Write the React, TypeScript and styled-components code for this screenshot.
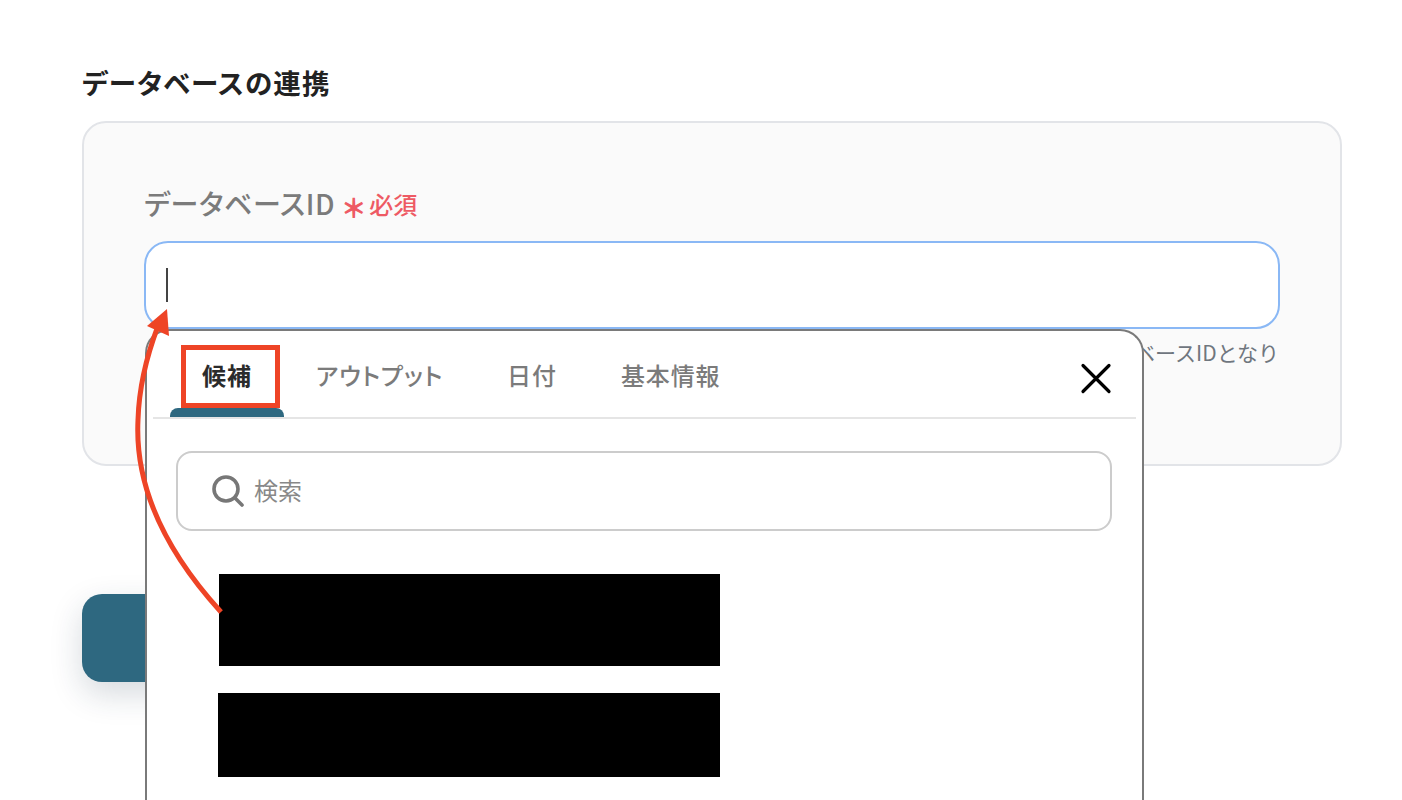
import React from 'react'
import styled, { createGlobalStyle } from 'styled-components'

const tabs = ['候補', 'アウトプット', '日付', '基本情報']

export default function App() {
  return (
    <Page>
      <GlobalStyle />
      <Title>データベースの連携</Title>
      <Panel>
        <FieldLabel>
          データベースID
          <RequiredMark>
            <Asterisk>＊</Asterisk>必須
          </RequiredMark>
        </FieldLabel>
        <FieldArea>
          <TextField>
            <Caret />
          </TextField>
          <Hint>データベースのURLの一部がデータベースIDとなり</Hint>
          <Popup>
            <TabBar>
              {tabs.map((tab, i) => (
                <Tab key={tab} $active={i === 0}>
                  {tab}
                </Tab>
              ))}
              <CloseButton>
                <svg width="32" height="32" viewBox="0 0 32 32" fill="none" stroke="#000" strokeWidth="3.2" strokeLinecap="round">
                  <path d="M3 3.5 29 29.5M29 3.5 3 29.5" />
                </svg>
              </CloseButton>
            </TabBar>
            <PopupBody>
              <SearchBox>
                <svg width="32" height="32" viewBox="0 0 32 32" fill="none" stroke="#777" strokeWidth="3.6" strokeLinecap="round">
                  <circle cx="14" cy="14" r="12" />
                  <path d="M23 23 30 30" />
                </svg>
                <SearchText>検索</SearchText>
              </SearchBox>
              <Redacted $indent={43} $height={92} $gap={27} />
              <Redacted $indent={42} $height={84} />
            </PopupBody>
          </Popup>
        </FieldArea>
      </Panel>
      <SaveButton />
      <Annotation width="1402" height="800" viewBox="0 0 1402 800" fill="none">
        <rect x="183.5" y="347.5" width="94" height="58" stroke="#ee4426" strokeWidth="5" />
        <path d="M221 612C160 545 135 480 138 420 139 385 147 355 158 326" stroke="#ee4426" strokeWidth="5" />
        <path d="M167 309 169 336 147 326Z" fill="#ee4426" />
      </Annotation>
    </Page>
  )
}

const GlobalStyle = createGlobalStyle`
  html, body {
    margin: 0;
    background: #fff;
    overflow: hidden;
  }

  * {
    box-sizing: border-box;
  }
`

const Page = styled.div`
  position: relative;
  width: 1402px;
  height: 800px;
  overflow: hidden;
  padding: 62px 60px 0 82px;
  font-family: "Noto Sans CJK JP", "Noto Sans", sans-serif;
  font-feature-settings: "palt";
`

const Title = styled.h2`
  margin: 0 0 19px;
  font-size: 27.5px;
  line-height: 40px;
  font-weight: 700;
  letter-spacing: 1.2px;
  color: #222;
`

const Panel = styled.section`
  height: 345px;
  padding: 60px 60px 0;
  background: #fafafa;
  border: 2px solid #e2e4e8;
  border-radius: 24px;
`

const FieldLabel = styled.div`
  display: flex;
  align-items: center;
  height: 40px;
  margin-bottom: 18px;
  font-size: 28px;
  font-weight: 500;
  letter-spacing: 0.6px;
  color: #7b7b7b;
`

const RequiredMark = styled.span`
  display: flex;
  align-items: center;
  margin-left: 9px;
  font-size: 24px;
  font-weight: 500;
  letter-spacing: 0;
  color: #ee5a64;
`

const Asterisk = styled.span`
  width: 26px;
  font-size: 26px;
  font-weight: 900;
  line-height: 24px;
  margin-top: 7px;
  margin-left: -1px;
`

const FieldArea = styled.div`
  position: relative;
`

const TextField = styled.div`
  height: 88px;
  padding: 25px 20px;
  background: #fff;
  border: 2px solid #8ab8f5;
  border-radius: 24px;
`

const Caret = styled.div`
  width: 2px;
  height: 34px;
  background: #444;
`

const Hint = styled.div`
  padding: 7px 1px 0 0;
  font-size: 21px;
  line-height: 32px;
  text-align: right;
  white-space: nowrap;
  font-feature-settings: normal;
  color: #6f767e;
`

const Popup = styled.div`
  position: absolute;
  top: 88px;
  left: 1px;
  width: 999px;
  height: 640px;
  padding: 0 6px;
  background: #fff;
  border: 2px solid #7a7a7a;
  border-bottom: 0;
  border-radius: 24px 24px 0 0;
`

const TabBar = styled.div`
  display: flex;
  align-items: stretch;
  height: 88px;
  padding-left: 17px;
  border-bottom: 2px solid #e5e5e5;
`

const Tab = styled.div<{ $active: boolean }>`
  position: relative;
  padding: 0 32px;
  font-size: 24px;
  line-height: 88px;
  letter-spacing: 0.9px;
  font-weight: ${(p) => (p.$active ? 700 : 500)};
  color: ${(p) => (p.$active ? '#2b2b2b' : '#7b7b7b')};

  ${(p) =>
    p.$active &&
    `&::after {
      content: '';
      position: absolute;
      left: 0;
      right: 0;
      bottom: 0;
      height: 9px;
      background: #2e6880;
      border-radius: 8px 8px 0 0;
    }`}
`

const CloseButton = styled.div`
  display: flex;
  align-items: center;
  height: 94px;
  margin-left: auto;
  margin-right: 24px;
`

const PopupBody = styled.div`
  padding: 32px 24px 0 23px;
`

const SearchBox = styled.div`
  display: flex;
  align-items: center;
  gap: 10px;
  height: 80px;
  padding: 0 34px;
  margin-bottom: 43px;
  border: 2px solid #ccc;
  border-radius: 16px;
`

const SearchText = styled.span`
  font-size: 24px;
  line-height: 32px;
  margin-top: -3px;
  color: #888;
`

const Redacted = styled.div<{ $indent: number; $height: number; $gap?: number }>`
  width: ${(p) => 544 - p.$indent}px;
  height: ${(p) => p.$height}px;
  margin-left: ${(p) => p.$indent}px;
  margin-bottom: ${(p) => p.$gap ?? 0}px;
  background: #000;
`

const SaveButton = styled.div`
  width: 240px;
  height: 88px;
  margin-top: 128px;
  background: #2e6880;
  border-radius: 20px;
  box-shadow: 0 12px 32px rgba(30, 50, 70, 0.18);
`

const Annotation = styled.svg`
  position: absolute;
  top: 0;
  left: 0;
  pointer-events: none;
`
